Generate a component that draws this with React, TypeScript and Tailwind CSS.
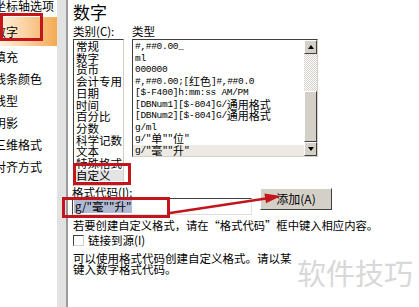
import React from 'react';

const sideItems = ['坐标轴选项', '数字', '填充', '线条颜色', '线型', '阴影', '三维格式', '对齐方式'];

const categories = [
  '常规',
  '数字',
  '货币',
  '会计专用',
  '日期',
  '时间',
  '百分比',
  '分数',
  '科学记数',
  '文本',
  '特殊格式',
  '自定义',
];

const types = [
  '#,##0.00_',
  'ml',
  '000000',
  '#,##0.00;[红色]#,##0.0',
  '[$-F400]h:mm:ss AM/PM',
  '[DBNum1][$-804]G/通用格式',
  '[DBNum2][$-804]G/通用格式',
  'g/ml',
  'g/"单""位"',
  'g/"毫""升"',
];

// ascii in a narrow mono, chinese at full width like the old bitmap font
function Mixed({ text }: { text: string }) {
  const parts = text.split(/([\u4e00-\u9fff]+)/);
  return (
    <>
      {parts.map((p, i) =>
        /[\u4e00-\u9fff]/.test(p) ? (
          <span key={i} className="font-['Noto_Sans_CJK_SC',sans-serif] text-[11px] leading-[11.5px] tracking-normal">
            {p}
          </span>
        ) : (
          <span key={i}>{p}</span>
        ),
      )}
    </>
  );
}

function ScrollButton({ up }: { up?: boolean }) {
  return (
    <div className="flex h-[14px] items-center justify-center border border-t-white border-l-white border-b-[#404040] border-r-[#404040] bg-[#d4d0c8]">
      <div
        className={
          up
            ? 'h-0 w-0 border-x-[3.5px] border-b-[4px] border-x-transparent border-b-black'
            : 'h-0 w-0 border-x-[3.5px] border-t-[4px] border-x-transparent border-t-black'
        }
      />
    </div>
  );
}

export default function App() {
  return (
    <div className="relative flex h-[307px] w-[419px] overflow-hidden bg-white font-['Noto_Sans_CJK_SC','Noto_Sans',sans-serif] text-black">
      <aside className="-mt-[5px] flex w-[57px] shrink-0 flex-col overflow-hidden">
        {sideItems.map((t, i) => (
          <div
            key={t}
            className={
              i === 1
                ? 'flex h-[29px] items-center whitespace-nowrap bg-gradient-to-r from-[#fff0dc] to-[#f4aa50] text-[12px]'
                : 'flex h-[22px] items-center whitespace-nowrap text-[12px]'
            }
          >
            <span className="-ml-[6px]">{t}</span>
          </div>
        ))}
      </aside>

      <div className="w-[11px] shrink-0 border-r-2 border-[#9a9a9a] bg-[#e2e2e2]" />

      <main className="flex flex-1 flex-col pl-[5px]">
        <div className="mt-[2px] text-[17px] leading-[19px]">数字</div>

        <div className="mt-[4px] flex text-[11.5px] leading-[12px]">
          <span className="w-[59px]">类别(C):</span>
          <span>类型</span>
        </div>

        <div className="mt-[2px] flex items-start gap-[8px]">
          <div className="h-[147px] w-[51px] overflow-hidden border border-t-[#404040] border-l-[#404040] border-b-[#d4d0c8] border-r-[#d4d0c8] pt-[1px] text-[11.5px] leading-[11.7px]">
            {categories.map((c) => (
              <div key={c} className={c === '自定义' ? 'bg-[#e4e4e4] pl-[2px]' : 'pl-[2px]'}>
                {c}
              </div>
            ))}
          </div>

          <div className="flex h-[118px] w-[186px] border border-t-[#404040] border-l-[#404040] border-b-[#d4d0c8] border-r-[#d4d0c8]">
            <div className="flex-1 overflow-hidden whitespace-nowrap pt-[1px] font-['Liberation_Mono',monospace] text-[9.5px] tracking-[-0.3px]">
              {types.map((t, i) => (
                <div
                  key={t}
                  className={
                    i === types.length - 1
                      ? 'flex h-[14px] items-start bg-[#eceae2] pl-[2px] leading-[11.5px]'
                      : 'flex h-[11.5px] items-center pl-[2px] leading-[11.5px]'
                  }
                >
                  <Mixed text={t} />
                </div>
              ))}
            </div>
            <div className="flex w-[13px] flex-col">
              <ScrollButton up />
              <div className="h-[37px] bg-[repeating-conic-gradient(#ffffff_0_25%,#d4d0c8_0_50%)] [background-size:2px_2px]" />
              <div className="h-[51px] border border-t-white border-l-white border-b-[#404040] border-r-[#404040] bg-[#d4d0c8]" />
              <ScrollButton />
            </div>
          </div>
        </div>

        <div className="flex items-start">
          <div className="-ml-[1px] flex w-[180px] flex-col">
            <div className="text-[11.5px] leading-[12px]">格式代码(I):</div>
            <div className="flex h-[17px] items-center border border-t-[#404040] border-l-[#404040] border-b-[#e0e0e0] border-r-[#e0e0e0] pl-[1px]">
              <span className="bg-[#b0bad3] px-[1px] text-[11.5px] leading-[13px]">g/"毫""升"</span>
            </div>
          </div>
          <button className="mt-[2px] ml-[8px] flex h-[22px] w-[72px] items-center justify-center border border-t-white border-l-white border-b-[#404040] border-r-[#404040] bg-[#d4d0c8] text-[12px]">
            添加(A)
          </button>
        </div>

        <p className="mt-[4px] whitespace-nowrap text-[11.3px] leading-[12px]">
          若要创建自定义格式，请在“格式代码”框中键入相应内容。
        </p>

        <label className="mt-[4px] flex h-[11px] items-center gap-[4px] text-[11.5px]">
          <span className="h-[11px] w-[11px] border border-t-[#404040] border-l-[#404040] border-b-[#d4d0c8] border-r-[#d4d0c8] bg-white" />
          <span className="leading-[11px]">链接到源(I)</span>
        </label>

        <p className="mt-[7px] whitespace-nowrap text-[11.5px] leading-[10.5px]">
          可以使用格式代码创建自定义格式。请以某
          <br />
          键入数字格式代码。
        </p>
      </main>

      {/* annotations laid over the dialog */}
      <div className="pointer-events-none absolute left-0 top-[13px] h-[28px] w-[43px] border-[3px] border-[#c3161c]" />
      <div className="pointer-events-none absolute left-[73px] top-[163px] h-[22px] w-[58px] border-[3px] border-[#c3161c]" />
      <div className="pointer-events-none absolute left-[62px] top-[197px] h-[21px] w-[108px] border-[3px] border-[#c3161c]" />
      <svg className="pointer-events-none absolute inset-0" width="419" height="307">
        <line x1="170" y1="213" x2="266" y2="198.5" stroke="#c3161c" strokeWidth="2.5" />
        <polygon points="281,196 266,203.3 264.4,193.5" fill="#c3161c" />
      </svg>

      <div className="pointer-events-none absolute left-[297px] top-[258px] text-[29px] leading-none text-[#d8d8d8]">
        软件技巧
      </div>
    </div>
  );
}
